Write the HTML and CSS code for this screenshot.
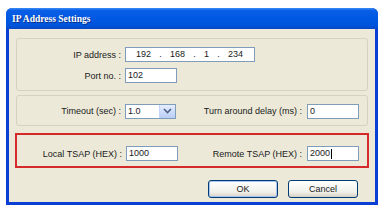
FILE: index.html
```html
<!DOCTYPE html>
<html lang="en">
<head>
    <meta charset="UTF-8">
    <title>IP Address Settings</title>
    <link rel="stylesheet" href="styles.css">
</head>
<body>
    <div class="window">
        <div class="titlebar">IP Address Settings</div>
        <div class="content">
            <div class="group group-ip">
                <div class="row">
                    <label class="label">IP address :</label>
                    <div class="field ip-field">
                        <span>192</span><span class="dot">.</span><span>168</span><span class="dot">.</span><span>1</span><span class="dot">.</span><span>234</span>
                    </div>
                </div>
                <div class="row">
                    <label class="label">Port no. :</label>
                    <div class="field short">102</div>
                </div>
            </div>

            <div class="group group-pair">
                <label class="label">Timeout (sec) :</label>
                <div class="field select">
                    <span class="select-value">1.0</span>
                    <span class="select-btn">
                        <svg width="9" height="6" viewBox="0 0 9 6"><path d="M1 1 L4.5 4.5 L8 1" fill="none" stroke="#4d6185" stroke-width="1.6"/></svg>
                    </span>
                </div>
                <label class="label label-right">Turn around delay (ms) :</label>
                <div class="field short">0</div>
            </div>

            <div class="group group-pair group-red">
                <label class="label">Local TSAP (HEX) :</label>
                <div class="field short">1000</div>
                <label class="label label-right">Remote TSAP (HEX) :</label>
                <div class="field short">2000<span class="caret"></span></div>
            </div>

            <div class="buttons">
                <button class="btn btn-default">OK</button>
                <button class="btn">Cancel</button>
            </div>
        </div>
    </div>
</body>
</html>
```

FILE: styles.css
```css
html, body {
    margin: 0;
    background-color: #ffffff;
}
body {
    padding: 8px 0 0 6px;
    font-family: "Liberation Sans", Arial, sans-serif;
    font-size: 9px;
    color: #1a1a1a;
}
.window {
    width: 372px;
    height: 197px;
    display: flex;
    flex-direction: column;
    border-radius: 6px 6px 0 0;
    overflow: hidden;
    background-color: #0a3fd6;
}
.titlebar {
    height: 21px;
    line-height: 22px;
    padding-left: 6px;
    color: #fff;
    font-family: "Liberation Serif", serif;
    font-weight: bold;
    font-size: 9.5px;
    background: linear-gradient(#3c8cf6 0, #0a5ee6 12%, #0058e2 50%, #0054da 85%, #0a46c4 100%);
    text-shadow: 1px 1px 0 #0a2f8a;
}
.content {
    flex: 1;
    margin: 0 3px 3px 3px;
    background-color: #ece9d8;
    padding-top: 9px;
    display: flex;
    flex-direction: column;
}
.group {
    margin: 0 7px;
    border: 1px solid #d5d2c0;
    border-radius: 3px;
}
.group-ip {
    padding-top: 8px;
    box-sizing: border-box;
    display: flex;
    flex-direction: column;
    gap: 6px;
    height: 53px;
}
.row {
    display: flex;
    align-items: center;
}
.label {
    width: 104px;
    padding-right: 4px;
    text-align: right;
    white-space: nowrap;
}
.field {
    height: 15px;
    box-sizing: border-box;
    border: 1px solid #7f9db9;
    background: #fff;
    padding-left: 2px;
    line-height: 13px;
    display: flex;
    align-items: center;
}
.short {
    width: 52px;
}
.ip-field {
    width: 130px;
    padding-left: 10px;
}
.ip-field span {
    display: inline-block;
}
.ip-field .dot {
    width: 19px;
    text-align: center;
}
.group-pair {
    margin-top: 4px;
    display: flex;
    align-items: center;
    height: 31px;
    box-sizing: border-box;
    padding-top: 1px;
}
.label-right {
    flex: 1;
    width: auto;
    padding-right: 5px;
}
.group-pair .field:last-child {
    margin-right: 8px;
}
.select {
    width: 51px;
    padding-right: 0;
    justify-content: space-between;
}
.select-btn {
    width: 15px;
    height: 13px;
    background: linear-gradient(#e6eeff, #b9cdf6);
    border-left: 1px solid #c3d3fd;
    display: flex;
    align-items: center;
    justify-content: center;
}
.group-red {
    margin: 7px 6px 0 6px;
    border: 2px solid #d42a2a;
    border-radius: 0;
    height: 35px;
    padding-top: 6px;
}
.group-red .label {
    width: 105px;
}
.caret {
    display: inline-block;
    width: 1px;
    height: 10px;
    background: #000;
    margin-left: 1px;
}
.buttons {
    display: flex;
    justify-content: flex-end;
    gap: 10px;
    margin: 12px 17px 0 0;
}
.btn {
    width: 70px;
    height: 18px;
    padding: 0;
    font-family: "Liberation Sans", Arial, sans-serif;
    font-size: 9px;
    color: #1a1a1a;
    border: 1px solid #003c74;
    border-radius: 3px;
    background: linear-gradient(#ffffff, #f0f0ea 70%, #d6d0c5);
}
.btn-default {
    box-shadow: inset 0 0 0 1px #a9c3f2;
}
```
